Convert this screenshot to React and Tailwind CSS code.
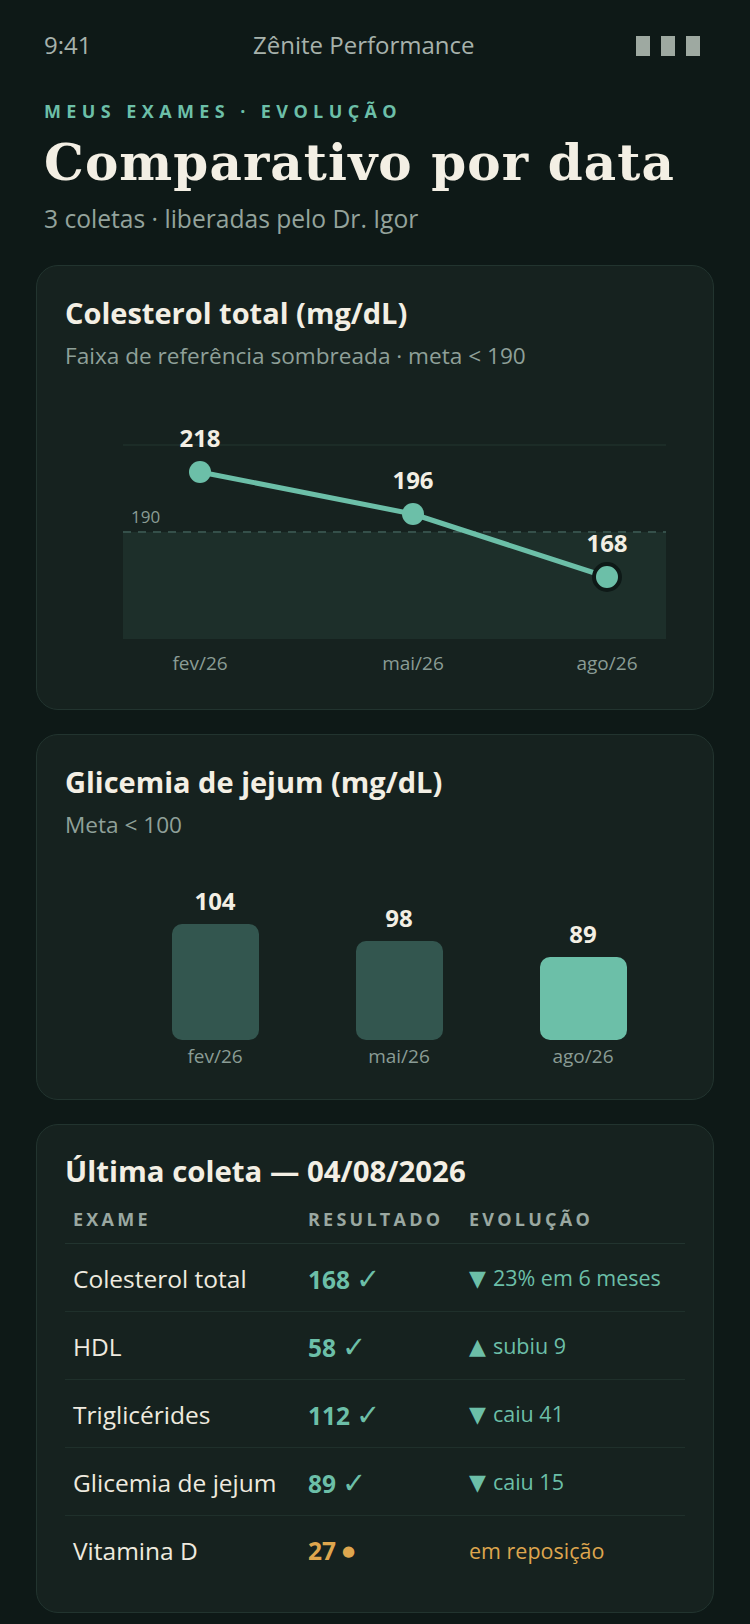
const TEAL = "#6cbfa8";

const bars = [
  { v: "104", label: "fev/26", cls: "h-[116px] bg-[#33564f]" },
  { v: "98", label: "mai/26", cls: "h-[99px] bg-[#33564f]" },
  { v: "89", label: "ago/26", cls: "h-[83px] bg-[#6cbfa8]" },
];

const rows = [
  { name: "Colesterol total", val: "168", mark: "✓", arrow: "▼", evo: "23% em 6 meses", warn: false },
  { name: "HDL", val: "58", mark: "✓", arrow: "▲", evo: "subiu 9", warn: false },
  { name: "Triglicérides", val: "112", mark: "✓", arrow: "▼", evo: "caiu 41", warn: false },
  { name: "Glicemia de jejum", val: "89", mark: "✓", arrow: "▼", evo: "caiu 15", warn: false },
  { name: "Vitamina D", val: "27", mark: "●", arrow: "", evo: "em reposição", warn: true },
];

function LineChart() {
  const pts = [
    { x: 135, y: 71, v: "218", l: "fev/26" },
    { x: 348, y: 113, v: "196", l: "mai/26" },
    { x: 542, y: 176, v: "168", l: "ago/26" },
  ];
  return (
    <svg width="620" height="280" viewBox="0 0 620 280" className="mt-[30px] block">
      <line x1="58" y1="44" x2="601" y2="44" stroke="#1f302b" strokeWidth="1.5" />
      <rect x="58" y="131" width="543" height="107" fill="#1d2f2a" />
      <line x1="58" y1="131" x2="601" y2="131" stroke="#35504a" strokeWidth="2" strokeDasharray="8 7" />
      <text x="66" y="122" fontSize="17" fill="#8a9c95" fontFamily="Open Sans">190</text>
      <polyline
        points={pts.map((p) => `${p.x},${p.y}`).join(" ")}
        fill="none"
        stroke={TEAL}
        strokeWidth="5"
        strokeLinejoin="round"
        strokeLinecap="round"
      />
      <circle cx="135" cy="71" r="11" fill={TEAL} />
      <circle cx="348" cy="113" r="11" fill={TEAL} />
      <circle cx="542" cy="176" r="13" fill={TEAL} stroke="#0e1917" strokeWidth="4" />
      {pts.map((p) => (
        <text
          key={p.v}
          x={p.x}
          y={p.y - 25}
          textAnchor="middle"
          fontSize="24"
          fontWeight="700"
          fill="#f3efe4"
          fontFamily="Open Sans"
        >
          {p.v}
        </text>
      ))}
      {pts.map((p) => (
        <text
          key={p.l}
          x={p.x}
          y="269"
          textAnchor="middle"
          fontSize="19"
          fill="#8a9c95"
          fontFamily="Open Sans"
        >
          {p.l}
        </text>
      ))}
    </svg>
  );
}

export default function App() {
  return (
    <div className="min-h-screen bg-[#0e1917] px-[36px] pb-[40px] font-['Open_Sans',sans-serif]">
      {/* status bar */}
      <div className="flex items-center justify-between pt-[28px] pl-[8px] pr-[14px] text-[24px] leading-[34px] text-[#a7b2ac]">
        <span>9:41</span>
        <span>Zênite Performance</span>
        <div className="mt-[2px] flex gap-[11px]">
          <div className="h-[20px] w-[14px] bg-[#9ea9a1]" />
          <div className="h-[20px] w-[14px] bg-[#9ea9a1]" />
          <div className="h-[20px] w-[14px] bg-[#9ea9a1]" />
        </div>
      </div>

      {/* header */}
      <div className="px-[8px]">
        <div className="mt-[37px] text-[18px] font-bold leading-[24px] tracking-[0.3em] text-[#6cbfa8]">
          MEUS EXAMES · EVOLUÇÃO
        </div>
        <h1 className="mt-[12px] font-['DejaVu_Serif',serif] text-[50px] font-bold leading-[55px] tracking-[1.1px] text-[#f3efe4]">
          Comparativo por data
        </h1>
        <p className="mt-[13px] text-[24.6px] leading-[32px] text-[#94a39c]">
          3 coletas · liberadas pelo Dr. Igor
        </p>
      </div>

      <div className="mt-[30px] flex flex-col gap-[24px]">
        {/* card 1 */}
        <section className="rounded-[22px] border border-[#22342f] bg-[#16221f] p-[28px]">
          <h2 className="text-[29px] font-bold leading-[38px] text-[#f3efe4]">Colesterol total (mg/dL)</h2>
          <p className="mt-[9px] text-[22.6px] leading-[30px] text-[#8fa099]">
            Faixa de referência sombreada · meta &lt; 190
          </p>
          <LineChart />
        </section>

        {/* card 2 */}
        <section className="rounded-[22px] border border-[#22342f] bg-[#16221f] p-[28px]">
          <h2 className="text-[29px] font-bold leading-[38px] text-[#f3efe4]">Glicemia de jejum (mg/dL)</h2>
          <p className="mt-[9px] text-[22.6px] leading-[30px] text-[#8fa099]">Meta &lt; 100</p>
          <div className="mt-[46px] ml-[58px] grid w-[552px] grid-cols-3 items-end">
            {bars.map((b) => (
              <div key={b.label} className="flex flex-col items-center">
                <div className="mb-[8px] text-[24px] font-bold leading-[30px] text-[#f3efe4]">{b.v}</div>
                <div className={`w-[87px] rounded-[10px] ${b.cls}`} />
                <div className="mt-[2px] text-[19px] leading-[29px] text-[#8a9c95]">{b.label}</div>
              </div>
            ))}
          </div>
        </section>

        {/* card 3 */}
        <section className="rounded-[22px] border border-[#22342f] bg-[#16221f] p-[28px]">
          <h2 className="text-[29.4px] font-bold leading-[37px] text-[#f3efe4]">Última coleta — 04/08/2026</h2>
          <div className="grid grid-cols-[235px_161px_1fr] border-b border-[#22342f] pt-[17px] pb-[12px] text-[18px] font-bold leading-[24px] tracking-[0.18em] text-[#9aa8a1]">
            <div className="pl-[8px]">EXAME</div>
            <div className="pl-[8px]">RESULTADO</div>
            <div className="pl-[8px]">EVOLUÇÃO</div>
          </div>
          {rows.map((r, i) => (
            <div
              key={r.name}
              className={`grid h-[68px] grid-cols-[235px_161px_1fr] items-center pt-[2px] ${
                i < rows.length - 1 ? "border-b border-[#1f302b]" : ""
              }`}
            >
              <div className="pl-[8px] text-[24.5px] leading-[32px] text-[#eeeadf]">{r.name}</div>
              <div
                className={`flex h-[32px] items-baseline gap-[6px] pl-[8px] text-[24.5px] font-bold leading-[32px] ${
                  r.warn ? "text-[#dea64e]" : "text-[#6cbfa8]"
                }`}
              >
                <span>{r.val}</span>
                {r.warn ? (
                  <span className="self-center font-['DejaVu_Sans',sans-serif] text-[15px] font-normal leading-[15px]">
                    {r.mark}
                  </span>
                ) : (
                  <span className="font-['DejaVu_Sans',sans-serif] text-[29px] font-normal leading-[32px]">
                    {r.mark}
                  </span>
                )}
              </div>
              <div
                className={`flex items-baseline gap-[7px] pl-[8px] text-[21.5px] leading-[32px] ${
                  r.warn ? "text-[#dea64e]" : "text-[#6cbfa8]"
                }`}
              >
                {r.arrow ? (
                  <span className="font-['DejaVu_Sans',sans-serif] text-[22px]">{r.arrow}</span>
                ) : null}
                <span>{r.evo}</span>
              </div>
            </div>
          ))}
        </section>
      </div>
    </div>
  );
}
